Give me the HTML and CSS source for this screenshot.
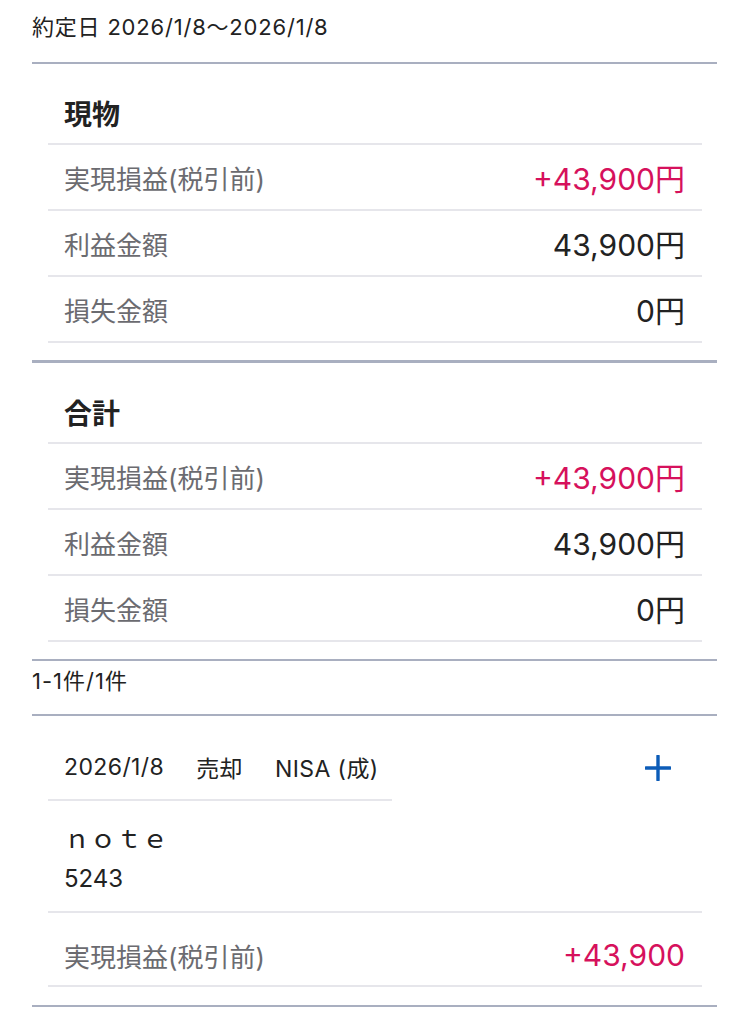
FILE: index.html
```html
<!DOCTYPE html>
<html lang="ja">
<head>
  <meta charset="UTF-8">
  <meta name="viewport" content="width=device-width, initial-scale=1.0">
  <title>実現損益</title>
  <link rel="stylesheet" href="styles.css">
</head>
<body>
  <div class="page">
    <div class="period">約定日 2026/1/8〜2026/1/8</div>

    <section class="summary summary-first">
      <h2 class="summary-title">現物</h2>
      <div class="row">
        <span class="label">実現損益(税引前)</span>
        <span class="value plus">+43,900円</span>
      </div>
      <div class="row">
        <span class="label">利益金額</span>
        <span class="value">43,900円</span>
      </div>
      <div class="row">
        <span class="label">損失金額</span>
        <span class="value">0円</span>
      </div>
    </section>

    <section class="summary">
      <h2 class="summary-title">合計</h2>
      <div class="row">
        <span class="label">実現損益(税引前)</span>
        <span class="value plus">+43,900円</span>
      </div>
      <div class="row">
        <span class="label">利益金額</span>
        <span class="value">43,900円</span>
      </div>
      <div class="row">
        <span class="label">損失金額</span>
        <span class="value">0円</span>
      </div>
    </section>

    <div class="count">1-1件/1件</div>

    <div class="trade">
      <div class="trade-head">
        <div class="trade-meta">
          <span>2026/1/8</span>
          <span>売却</span>
          <span>NISA (成)</span>
        </div>
        <button class="toggle" type="button" aria-label="開く">
          <svg width="26" height="26" viewBox="0 0 26 26">
            <path d="M13 1v24M1 13h24" stroke="#0c5cb8" stroke-width="3.4" stroke-linecap="round" fill="none"/>
          </svg>
        </button>
      </div>
      <div class="trade-name">
        <div class="name">ｎｏｔｅ</div>
        <div class="code">5243</div>
      </div>
      <div class="row row-trade">
        <span class="label">実現損益(税引前)</span>
        <span class="value plus">+43,900</span>
      </div>
    </div>
  </div>
</body>
</html>
```

FILE: styles.css
```css
body {
  margin: 0;
  background: #fff;
  color: #222;
  font-family: Inter, "Noto Sans CJK JP", sans-serif;
}
.page {
  margin: 0 33px 0 32px;
}
.period {
  padding: 13px 0 21px;
  font-size: 22px;
  line-height: 28px;
  letter-spacing: 0.8px;
  border-bottom: 2px solid #a9afc0;
}
.summary {
  padding: 15px 15px 17px 16px;
  border-bottom: 2px solid #a9afc0;
}
.summary-first {
  border-bottom-width: 3px;
}
.summary-title {
  margin: 0;
  height: 66px;
  padding: 3px 0 0 16px;
  box-sizing: border-box;
  display: flex;
  align-items: center;
  font-size: 28px;
  font-weight: bold;
  border-bottom: 2px solid #e6e6eb;
}
.row {
  display: flex;
  justify-content: space-between;
  align-items: center;
  height: 64px;
  padding: 0 17px 0 16px;
  border-bottom: 2px solid #e6e6eb;
}
.label {
  font-size: 26px;
  color: #6b6b70;
}
.value {
  font-size: 30px;
  color: #222;
}
.plus {
  color: #d6115c;
}
.count {
  padding: 6px 0 19px;
  font-size: 22px;
  line-height: 28px;
  letter-spacing: 1px;
  border-bottom: 2px solid #a9afc0;
}
.trade {
  padding: 0 15px 18px 16px;
  border-bottom: 2px solid #a9afc0;
}
.trade-head {
  padding-top: 19px;
  display: flex;
  align-items: center;
  justify-content: space-between;
}
.trade-meta {
  width: 344px;
  height: 66px;
  box-sizing: border-box;
  padding-left: 16px;
  display: flex;
  align-items: center;
  gap: 32px;
  font-size: 23px;
  letter-spacing: 0.4px;
  border-bottom: 2px solid #e6e6eb;
}
.toggle {
  margin-right: 22px;
  width: 44px;
  height: 44px;
  padding: 0;
  border: 0;
  background: none;
  display: flex;
  align-items: center;
  justify-content: center;
}
.trade-name {
  padding: 18px 0 12px 16px;
  line-height: 40px;
  border-bottom: 2px solid #e6e6eb;
}
.name {
  font-size: 26px;
}
.code {
  font-size: 24px;
}
.row-trade {
  height: 74px;
  box-sizing: border-box;
  padding-top: 12px;
}
```
